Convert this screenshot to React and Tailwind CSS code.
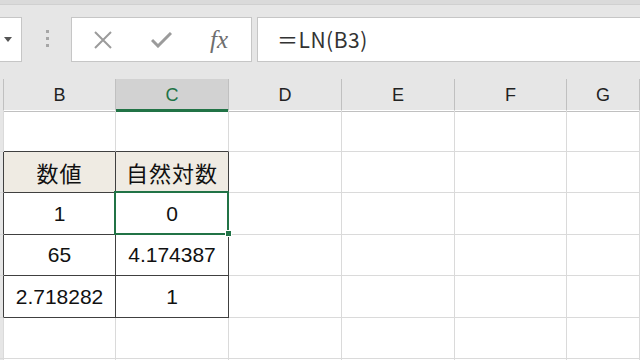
import React from 'react';

const cols = ['', 'B', 'C', 'D', 'E', 'F', 'G'];
const colTemplate = 'grid-cols-[4px_112px_113px_113px_113px_112px_1fr]';
const rowHeights = ['h-[42px]', 'h-[41px]', 'h-[42px]', 'h-[41px]', 'h-[42px]', 'h-[41px]', 'h-[20px]'];

// table content: row index -> [B, C]
const table = {
    1: ['数値', '自然対数'],
    2: ['1', '0'],
    3: ['65', '4.174387'],
    4: ['2.718282', '1'],
};

const cellFont = { fontFamily: '"Liberation Sans", "Noto Sans CJK JP", sans-serif' };

const App = () => {
    return (
        <div className="relative w-[640px] h-[360px] overflow-hidden bg-[#e6e6e6]" style={cellFont}>
            {/* top strip */}
            <div className="h-[5px] bg-[#dadada] border-b border-[#d0d0d0]" />

            {/* formula bar */}
            <div className="flex items-start h-[74px] pt-[12px]">
                <div className="w-[22px] h-[45px] bg-white border border-l-0 border-[#c6c6c6] flex items-center">
                    <div className="ml-[4px] w-0 h-0 border-l-[4px] border-r-[4px] border-t-[5px] border-l-transparent border-r-transparent border-t-[#555]" />
                </div>
                <div className="w-[49px] h-[45px] flex flex-col items-center justify-center gap-[4px] pl-[2px] pb-[2px]">
                    <div className="w-[3px] h-[3px] bg-[#a6a6a6]" />
                    <div className="w-[3px] h-[3px] bg-[#a6a6a6]" />
                    <div className="w-[3px] h-[3px] bg-[#a6a6a6]" />
                </div>
                <div className="w-[181px] h-[45px] bg-white border border-[#c6c6c6] flex items-center">
                    <svg className="ml-[21px]" width="20" height="18" viewBox="0 0 20 18">
                        <path d="M2 1 L18 17 M18 1 L2 17" stroke="#9b9b9b" strokeWidth="2" fill="none" />
                    </svg>
                    <svg className="ml-[38px]" width="21" height="16" viewBox="0 0 21 16">
                        <path d="M1 8 L7 14 L20 1" stroke="#9b9b9b" strokeWidth="3" fill="none" />
                    </svg>
                    <span
                        className="ml-[38px] text-[25px] italic text-[#6e6e6e] leading-none"
                        style={{ fontFamily: '"Liberation Serif", serif' }}
                    >
                        fx
                    </span>
                </div>
                <div className="ml-[5px] flex-1 h-[45px] bg-white border border-r-0 border-[#c6c6c6] flex items-center pl-[19px]">
                    <span className="text-[21px] text-[#333] tracking-[0.5px]" style={{ fontFamily: '"Noto Sans CJK JP", sans-serif' }}>
                        ＝LN(B3)
                    </span>
                </div>
            </div>

            {/* column headers */}
            <div className={`grid ${colTemplate} h-[31px]`}>
                {cols.map((c, i) => (
                    <div
                        key={i}
                        className={
                            c === 'C'
                                ? 'flex items-center justify-center bg-[#d2d2d2] border-r border-[#c0c0c0] border-b-[3px] border-b-[#217346] text-[18px] text-[#217346] pt-[3px]'
                                : 'flex items-center justify-center border-r border-b border-[#c0c0c0] text-[18px] text-[#222] pt-[1px]'
                        }
                    >
                        {c}
                    </div>
                ))}
            </div>

            {/* grid rows */}
            <div className="bg-white">
                {rowHeights.map((h, r) => (
                    <div key={r} className={`grid ${colTemplate} ${h}`}>
                        {cols.map((c, ci) => {
                            const inTable = r >= 1 && r <= 4;
                            const isTableCol = ci === 1 || ci === 2;
                            const darkBottom = (r >= 0 && r <= 4) && isTableCol;
                            const darkRight = inTable && (ci === 0 || isTableCol);
                            const headerRow = r === 1 && isTableCol;
                            let cls = 'flex items-center justify-center border-r border-b ';
                            cls += darkRight ? 'border-r-[#404040] ' : 'border-r-[#dadada] ';
                            cls += darkBottom ? 'border-b-[#404040] ' : 'border-b-[#dadada] ';
                            if (ci === 0) cls += 'bg-[#e6e6e6] ';
                            if (headerRow) cls += 'bg-[#efebe3] text-[22px] ';
                            else cls += 'text-[21px] ';
                            cls += 'text-[#111]';
                            const text = inTable && isTableCol ? table[r][ci - 1] : '';
                            return (
                                <div
                                    key={ci}
                                    className={cls}
                                    style={headerRow ? { fontFamily: '"Noto Sans CJK JP", sans-serif', letterSpacing: '1px' } : undefined}
                                >
                                    {text}
                                </div>
                            );
                        })}
                    </div>
                ))}
            </div>

            {/* active cell C3 */}
            <div className="absolute left-[114px] top-[191px] w-[115px] h-[44px] border-2 border-[#217346]" />
            <div className="absolute left-[225px] top-[230px] w-[7px] h-[7px] bg-[#217346] border border-white" />
        </div>
    );
};

export default App;
